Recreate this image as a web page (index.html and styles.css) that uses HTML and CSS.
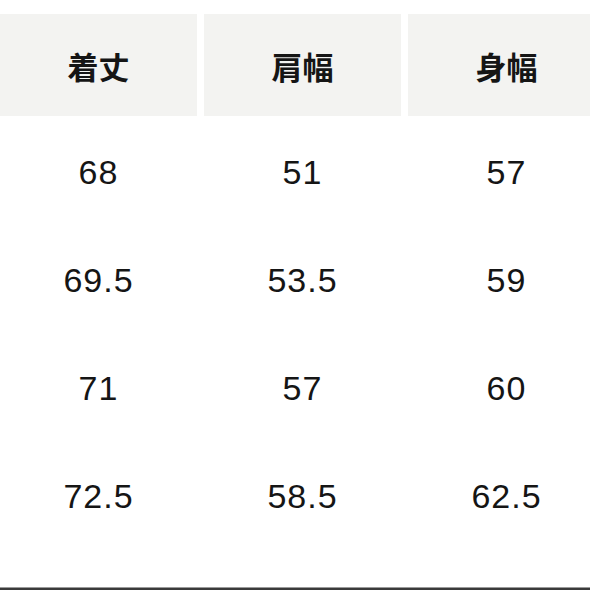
FILE: index.html
```html
<!DOCTYPE html>
<html lang="ja">
<head>
<meta charset="utf-8">
<link rel="stylesheet" href="styles.css">
</head>
<body>
<div class="page">
  <div class="table">
    <div class="head">着丈</div>
    <div class="head">肩幅</div>
    <div class="head">身幅</div>
    <div class="cell">68</div>
    <div class="cell">51</div>
    <div class="cell">57</div>
    <div class="cell">69.5</div>
    <div class="cell">53.5</div>
    <div class="cell">59</div>
    <div class="cell">71</div>
    <div class="cell">57</div>
    <div class="cell">60</div>
    <div class="cell">72.5</div>
    <div class="cell">58.5</div>
    <div class="cell">62.5</div>
  </div>
  <div class="rule"></div>
</div>
</body>
</html>
```
FILE: styles.css
```css
html, body {
  margin: 0;
  padding: 0;
  background: #ffffff;
  overflow: hidden;
}
.page {
  width: 590px;
  height: 590px;
  overflow: hidden;
  display: flex;
  flex-direction: column;
}
.table {
  margin-top: 14px;
  display: grid;
  grid-template-columns: 197px 197px 197px;
  column-gap: 7px;
  grid-template-rows: 102px repeat(4, 108px);
  row-gap: 0;
  width: 605px;
}
.table > div {
  display: flex;
  align-items: center;
  justify-content: center;
}
.head {
  background: #f3f3f1;
  font-family: "Noto Sans CJK JP", "Noto Sans", sans-serif;
  font-weight: 700;
  font-size: 31px;
  color: #151515;
}
.cell {
  font-family: "Liberation Sans", Arial, sans-serif;
  font-size: 34px;
  letter-spacing: 1px;
  color: #151515;
  padding-top: 4px;
  box-sizing: border-box;
}
.rule {
  margin-top: auto;
  height: 2px;
  border-top: 1px solid #9a9a9a;
  background: #3a3a3a;
}
```
